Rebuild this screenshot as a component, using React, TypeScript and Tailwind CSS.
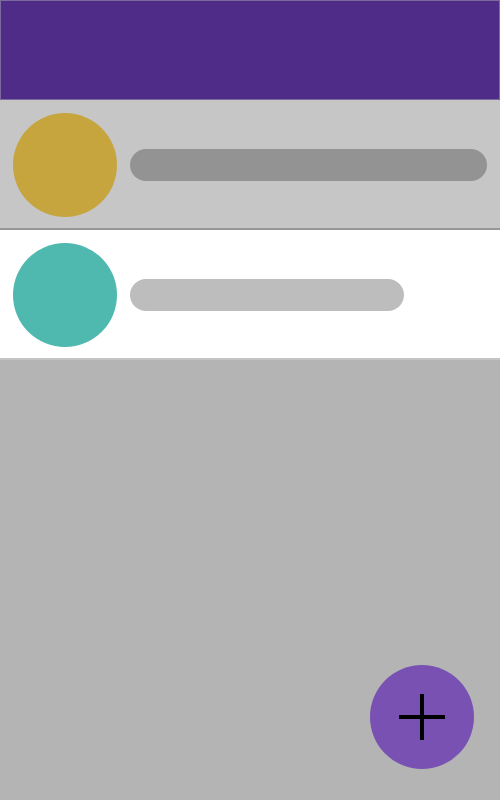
import React from 'react';

const rows = [
  { avatar: 'bg-[#c6a53f]', bar: 'bg-[#939393] w-[357px]', row: 'bg-[#c6c6c6] border-[#979797]' },
  { avatar: 'bg-[#4fb8af]', bar: 'bg-[#bdbdbd] w-[274px]', row: 'bg-white border-[#c4c4c4]' },
];

const App: React.FC = () => {
  return (
    <div className="relative h-[800px] w-[500px] overflow-hidden bg-[#b4b4b4] font-['Liberation_Sans',sans-serif]">
      {/* Header */}
      <div className="h-[100px] border border-[#7b6b9c] bg-[#502c89]" />

      {/* List */}
      <div className="flex flex-col">
        {rows.map((r, i) => (
          <div key={i} className={`flex items-center gap-[13px] border-b-2 pl-[13px] pr-[13px] pt-[13px] pb-[11px] ${r.row}`}>
            <div className={`h-[104px] w-[104px] shrink-0 rounded-full ${r.avatar}`} />
            <div className={`h-[32px] rounded-full ${r.bar}`} />
          </div>
        ))}
      </div>

      {/* FAB */}
      <button className="absolute bottom-[31px] right-[26px] flex h-[104px] w-[104px] items-center justify-center rounded-full bg-[#7851b3]">
        <svg width="46" height="46" viewBox="0 0 46 46">
          <path d="M23 0V46M0 23H46" stroke="#000" strokeWidth="4" />
        </svg>
      </button>
    </div>
  );
};

export default App;
